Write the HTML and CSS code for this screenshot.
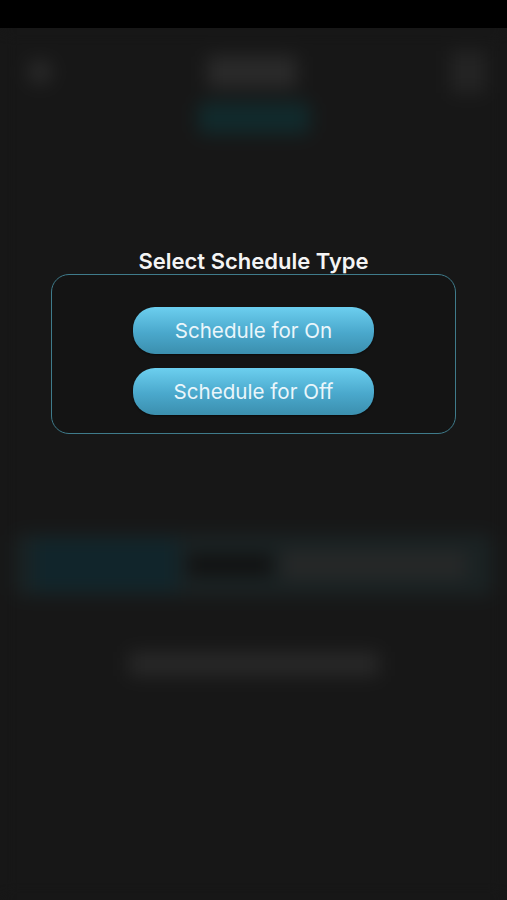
FILE: index.html
```html
<!DOCTYPE html>
<html>
<head>
<meta charset="utf-8">
<link rel="stylesheet" href="styles.css">
</head>
<body>
<div class="statusbar"></div>
<div class="app">
  <div class="header">
    <div class="back"></div>
    <div class="title-block"></div>
    <div class="menu"></div>
  </div>
  <div class="pill-row"><div class="pill"></div></div>
  <div class="tabs">
    <div class="tab tab-a"></div>
    <div class="tab tab-b"></div>
    <div class="tab tab-c"></div>
  </div>
  <div class="caption-row"><div class="caption"></div></div>
</div>
<div class="overlay">
  <h2 class="modal-title">Select Schedule Type</h2>
  <div class="modal-box">
    <button class="sched-btn">Schedule for On</button>
    <button class="sched-btn">Schedule for Off</button>
  </div>
</div>
</body>
</html>
```

FILE: styles.css
```css
html, body {
  margin: 0;
  padding: 0;
}
body {
  width: 507px;
  height: 900px;
  background: #171717;
  font-family: Inter, "Noto Sans", "Liberation Sans", sans-serif;
  position: relative;
  overflow: hidden;
}
.statusbar {
  position: relative;
  z-index: 1;
  height: 28px;
  background: #000;
}
.app {
  background: #171717;
  height: 872px;
  filter: blur(9px);
}
.header {
  box-sizing: border-box;
  height: 74px;
  padding: 14px 22px 0 28px;
  display: flex;
  align-items: center;
  justify-content: space-between;
}
.back {
  width: 24px;
  height: 24px;
  border-radius: 50%;
  background: #2a2a2a;
}
.title-block {
  width: 90px;
  height: 32px;
  background: #2a2a2a;
  border-radius: 4px;
}
.menu {
  width: 34px;
  height: 42px;
  background: #242424;
}
.pill-row {
  display: flex;
  justify-content: center;
}
.pill {
  width: 112px;
  height: 32px;
  background: #112a2c;
  border-radius: 6px;
}
.tabs {
  margin: 400px 14px 0 14px;
  height: 62px;
  background: #1a2223;
  display: flex;
  align-items: center;
  gap: 10px;
  padding: 0 26px 0 18px;
  border-radius: 6px;
}
.tab-a {
  width: 146px;
  height: 52px;
  background: #11252b;
}
.tab-b {
  width: 84px;
  height: 20px;
  background: #111;
}
.tab-c {
  flex: 1;
  height: 28px;
  background: #262828;
}
.caption-row {
  display: flex;
  justify-content: center;
  margin-top: 56px;
}
.caption {
  width: 250px;
  height: 24px;
  background: #282828;
}
.overlay {
  position: absolute;
  inset: 0;
  z-index: 2;
  display: flex;
  flex-direction: column;
  align-items: center;
  padding-top: 249px;
}
.modal-title {
  margin: 0 0 1px 0;
  font-size: 22px;
  line-height: 24px;
  font-weight: 600;
  color: #f4f4f4;
}
.modal-box {
  width: 403px;
  box-sizing: content-box;
  border: 1px solid #3f7b8b;
  border-radius: 18px;
  background: #141414;
  padding: 32px 0 18px 0;
  display: flex;
  flex-direction: column;
  align-items: center;
  gap: 14px;
}
.sched-btn {
  width: 241px;
  height: 47px;
  border: none;
  border-radius: 22px;
  background: linear-gradient(to bottom, #6ccfef 0%, #4aa8cc 55%, #3b8fae 100%);
  color: #eaf6fb;
  font-family: Inter, "Noto Sans", "Liberation Sans", sans-serif;
  font-size: 20.6px;
  font-weight: 400;
  padding: 0;
  box-shadow: 0 1px 2px rgba(0,0,0,0.5);
}
```
